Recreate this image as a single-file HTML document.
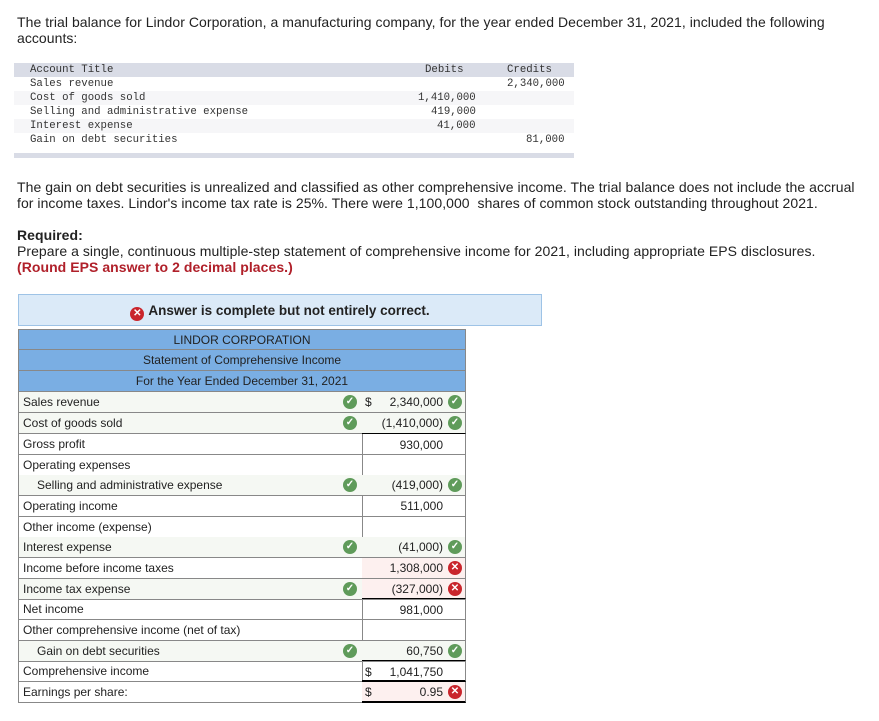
<!DOCTYPE html>
<html><head><meta charset="utf-8"><style>
body{margin:0;width:879px;height:721px;background:#fff;font-family:"Liberation Sans",sans-serif;color:#222;position:relative;overflow:hidden}
.p{position:absolute;left:17px;font-size:14px;line-height:16px;margin:0;letter-spacing:0.05px}
.tb{position:absolute;left:14px;top:63px;width:560px;font-family:"Liberation Mono",monospace;font-size:10.7px;color:#333}
.tb div{position:absolute;height:14px;line-height:14px;width:560px}
.tb span{position:absolute}
.r{position:absolute;left:18px;width:448px;height:21px;font-size:12px;line-height:21px;color:#222}
.l{position:absolute;left:0;top:0;width:345px;height:21px;border-left:1px solid #888;border-right:1px solid #888;border-bottom:1px solid #888;padding-left:4px;box-sizing:border-box}
.a{position:absolute;left:344px;top:0;width:104px;height:21px;border-right:1px solid #888;border-bottom:1px solid #888;text-align:right;box-sizing:border-box}
.a .v{position:absolute;right:22px}
.ic{position:absolute;width:14px;height:14px;border-radius:50%;top:3px;color:#fff;font-size:10px;line-height:14px;text-align:center;font-weight:bold}
.g{background:#5f9b5a}
.x{background:#c9252c}
.h{position:absolute;left:18px;width:448px;height:21px;background:#7aaee3;border:1px solid #888;border-top:none;text-align:center;font-size:12px;line-height:20px;color:#222;box-sizing:border-box}
</style></head><body>
<p class="p" style="top:14px">The trial balance for Lindor Corporation, a manufacturing company, for the year ended December 31, 2021, included the following<br>accounts:</p>
<div class="tb">
<div style="top:0;background:#d9dce6"><span style="left:16px">Account Title</span><span style="left:411px">Debits</span><span style="left:493px">Credits</span></div>
<div style="top:14px"><span style="left:16px">Sales revenue</span><span style="left:493px">2,340,000</span></div>
<div style="top:28px;background:#f6f6f8"><span style="left:16px">Cost of goods sold</span><span style="left:404px">1,410,000</span></div>
<div style="top:42px"><span style="left:16px">Selling and administrative expense</span><span style="left:417px">419,000</span></div>
<div style="top:56px;background:#f6f6f8"><span style="left:16px">Interest expense</span><span style="left:423px">41,000</span></div>
<div style="top:70px"><span style="left:16px">Gain on debt securities</span><span style="left:512px">81,000</span></div>
<div style="top:90px;height:5px;background:#d9dce6"></div>
</div>
<p class="p" style="top:179px">The gain on debt securities is unrealized and classified as other comprehensive income. The trial balance does not include the accrual<br>for income taxes. Lindor's income tax rate is 25%. There were 1,100,000&nbsp; shares of common stock outstanding throughout 2021.</p>
<p class="p" style="top:227px"><b>Required:</b><br>Prepare a single, continuous multiple-step statement of comprehensive income for 2021, including appropriate EPS disclosures.<br><b style="color:#b0202a">(Round EPS answer to 2 decimal places.)</b></p>
<div style="position:absolute;left:18px;top:294px;width:522px;height:30px;background:#dbeaf8;border:1px solid #9ec3e6;text-align:center;font-size:13.5px;line-height:31px;font-weight:bold;color:#222"><span style="display:inline-block;width:14px;height:14px;border-radius:50%;background:#c9252c;color:#fff;font-size:10px;line-height:14px;vertical-align:-1px;margin-right:4px">✕</span>Answer is complete but not entirely correct.</div>
<div class="h" style="top:329px;border-top:1px solid #888;height:21px">LINDOR CORPORATION</div>
<div class="h" style="top:350px">Statement of Comprehensive Income</div>
<div class="h" style="top:371px">For the Year Ended December 31, 2021</div>

<div class="r" style="top:392px"><div class="l" style="background:#f5f8f3">Sales revenue<span class="ic g" style="left:324px">✓</span></div><div class="a" style="background:#f5f8f3"><span style="position:absolute;left:3px">$</span><span class="v">2,340,000</span><span class="ic g" style="right:3px">✓</span></div></div>
<div class="r" style="top:413px"><div class="l" style="background:#f5f8f3">Cost of goods sold<span class="ic g" style="left:324px">✓</span></div><div class="a" style="background:#f5f8f3"><span class="v">(1,410,000)</span><span class="ic g" style="right:3px">✓</span></div></div>
<div class="r" style="top:434px"><div class="l">Gross profit</div><div class="a" style="border-top:1px solid #000;top:-1px;height:22px"><span class="v" style="top:1px">930,000</span></div></div>
<div class="r" style="top:455px"><div class="l">Operating expenses</div><div class="a"></div></div>
<div class="r" style="top:475px"><div class="l" style="background:#f5f8f3;padding-left:18px">Selling and administrative expense<span class="ic g" style="left:324px">✓</span></div><div class="a" style="background:#f5f8f3"><span class="v">(419,000)</span><span class="ic g" style="right:3px">✓</span></div></div>
<div class="r" style="top:496px"><div class="l">Operating income</div><div class="a"><span class="v">511,000</span></div></div>
<div class="r" style="top:517px"><div class="l">Other income (expense)</div><div class="a"></div></div>
<div class="r" style="top:537px"><div class="l" style="background:#f5f8f3">Interest expense<span class="ic g" style="left:324px">✓</span></div><div class="a" style="background:#f5f8f3"><span class="v">(41,000)</span><span class="ic g" style="right:3px">✓</span></div></div>
<div class="r" style="top:558px"><div class="l">Income before income taxes</div><div class="a" style="background:#fdf0ef"><span class="v">1,308,000</span><span class="ic x" style="right:3px">✕</span></div></div>
<div class="r" style="top:579px"><div class="l" style="background:#f5f8f3">Income tax expense<span class="ic g" style="left:324px">✓</span></div><div class="a" style="background:#fdf0ef"><span class="v">(327,000)</span><span class="ic x" style="right:3px">✕</span></div></div>
<div class="r" style="top:599px"><div class="l">Net income</div><div class="a" style="border-top:1px solid #000;top:-1px;height:22px"><span class="v" style="top:1px">981,000</span></div></div>
<div class="r" style="top:620px"><div class="l">Other comprehensive income (net of tax)</div><div class="a"></div></div>
<div class="r" style="top:641px"><div class="l" style="background:#f5f8f3;padding-left:18px">Gain on debt securities<span class="ic g" style="left:324px">✓</span></div><div class="a" style="background:#f5f8f3"><span class="v">60,750</span><span class="ic g" style="right:3px">✓</span></div></div>
<div class="r" style="top:661px"><div class="l">Comprehensive income</div><div class="a" style="border-top:1px solid #000;top:-1px;border-bottom:2px solid #000;height:22px"><span style="position:absolute;left:3px;top:1px">$</span><span class="v" style="top:1px">1,041,750</span></div></div>
<div class="r" style="top:682px"><div class="l">Earnings per share:</div><div class="a" style="background:#fdf0ef;border-bottom:2px solid #000;height:21px"><span style="position:absolute;left:3px">$</span><span class="v">0.95</span><span class="ic x" style="right:3px">✕</span></div></div>
</body></html>
